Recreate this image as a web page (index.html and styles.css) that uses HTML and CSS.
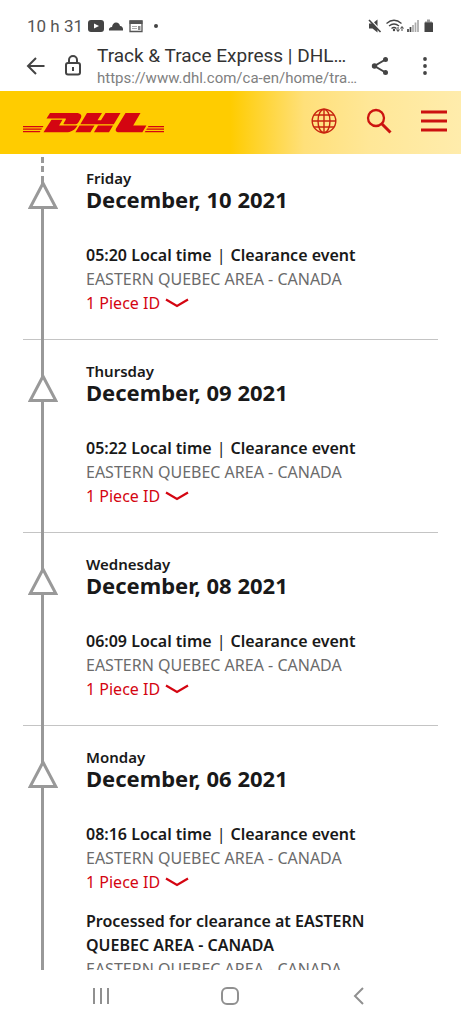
FILE: index.html
```html
<!DOCTYPE html>
<html lang="en">
<head>
<meta charset="utf-8">
<meta name="viewport" content="width=device-width, initial-scale=1">
<title>Track &amp; Trace Express | DHL</title>
<link rel="stylesheet" href="styles.css">
</head>
<body>
<svg class="defs" aria-hidden="true">
  <symbol id="chevron" viewBox="0 0 24 12"><path d="M1 2.500l11 6.500 11-6.500" fill="none" stroke="currentColor" stroke-width="2.200"/></symbol>
  <symbol id="triangle" viewBox="0 0 30 30"><path d="M15 3.200L27.800 27.500H2.200z" fill="#fff" stroke="currentColor" stroke-width="3"/></symbol>
</svg>

<div class="status-bar">
  <span class="clock">10 h 31</span>
  <svg class="status-left" width="72" height="14" viewBox="0 0 72 14" aria-hidden="true">
    <rect x="0" y="1" width="16" height="12" rx="3" fill="#444"/><path d="M6 4.500v5l5-2.500z" fill="#fff"/>
    <path d="M21 11.500c-.5-2 1-3.500 3-3.500 .5-3 2-4.500 4-4.500 2.500 0 3.500 1.500 4 3.500 2 0 3.500 2 3 4.500z" fill="#444"/>
    <path d="M42 2h12v10.500H42z" fill="none" stroke="#555" stroke-width="1.300"/><path d="M41.500 1.500h13V5h-13z" fill="#555"/><path d="M44 7.500h5M44 9.500h5" stroke="#aaa"/><path d="M50 7h2.500v4H50z" fill="#888"/>
    <circle cx="68" cy="7" r="2" fill="#444"/>
  </svg>
  <svg class="status-right" width="66" height="16" viewBox="0 0 66 16" aria-hidden="true">
    <path d="M1 5.500h3.500l5-4v13l-5-4H1z" fill="#444"/><path d="M2 1l11 12" stroke="#fff" stroke-width="1.500"/><path d="M1 2l11.500 12" stroke="#444" stroke-width="1.600"/>
    <g fill="none" stroke="#444" stroke-width="1.300"><path d="M18.500 5.500q7.500-6.500 15 0M21 8q5-4 10 0M23.500 10.500q2.500-2 5 0"/></g><circle cx="26" cy="12" r="1.200" fill="#444"/>
    <path d="M30 9v4m-1.500-1.500L30 13.500l1.500-2M34 13V9m-1.500 1.500L34 8.500l1.500 2" fill="none" stroke="#444"/>
    <path d="M40 14v-3M42.500 14V9" stroke="#444" stroke-width="1.700"/><path d="M45 14V7M47.500 14V4.500M50 14V2" stroke="#aaa" stroke-width="1.700"/>
    <path d="M57 3.500h2V1.500h3v2h2V5h-7z" fill="#999"/><path d="M56.500 4.500h8.500v9.500h-8.500z" fill="#444"/>
  </svg>
</div>

<div class="browser-bar">
  <button class="icon-button" aria-label="Back"><svg width="20" height="20" viewBox="0 0 20 20"><path d="M18.500 10H2M10 2l-8 8 8 8" fill="none" stroke="#444" stroke-width="2"/></svg></button>
  <button class="icon-button lock" aria-label="Site security"><svg width="18" height="22" viewBox="0 0 18 22"><rect x="2" y="8" width="14" height="11.500" rx="2" fill="none" stroke="#444" stroke-width="2"/><path d="M5 8V5a4 4 0 0 1 8 0v3M9 12v4" fill="none" stroke="#444" stroke-width="2"/></svg></button>
  <div class="page-info">
    <div class="page-title">Track &amp; Trace Express | DHL…</div>
    <div class="page-url">https://www.dhl.com/ca-en/home/tra…</div>
  </div>
  <button class="icon-button share" aria-label="Share"><svg width="18" height="20" viewBox="0 0 18 20"><path d="M14.500 3.500L3.500 10l11 6.500" fill="none" stroke="#444" stroke-width="2"/><g fill="#444"><circle cx="14.500" cy="3.500" r="2.500"/><circle cx="3.500" cy="10" r="2.700"/><circle cx="14.500" cy="16.500" r="2.500"/></g></svg></button>
  <button class="icon-button more" aria-label="More options"><svg width="6" height="20" viewBox="0 0 6 20" fill="#444"><circle cx="3" cy="3" r="1.900"/><circle cx="3" cy="10" r="1.900"/><circle cx="3" cy="17" r="1.900"/></svg></button>
</div>

<header class="site-header">
  <a class="logo" href="#" aria-label="DHL home">
    <svg width="142" height="20" viewBox="0 0 142 20" fill="#d40511">
      <path d="M0 13h20.500l-.8 1.300H0zM0 15.500h19l-.8 1.300H0zM0 18h17.500l-.8 1.300H0zM125.500 13H141v1.300h-16.300zM124 15.500h17v1.300h-17.800zM122.500 18H141v1.300h-19.300z"/>
      <path d="M27 0h26c5 0 6.500 2.500 4.500 5.800l-2 3.400c-.8 1.300-1.600 2-3 2H41.500c-1 0-1.200-.5-.7-1.300l1.800-2.900c.5-.9.3-1.400-.6-1.400H23.500z"/>
      <path d="M28.500 6.800h11l-3.400 5.600h18.400C52 17 48 19.200 43 19.200H20.500z"/>
      <path d="M64 0h15l-4.500 7.300H78L82.500 0h15l-6.700 11.200H57.300zM56.500 12.400h15l-4.100 6.800h-15zM75 12.400h15l-4 6.800H71z"/>
      <path d="M102.500 0h15l-7.300 12.400h13.200l-4 6.800H96c-3.500 0-4-2.200-2.500-4.500z"/>
    </svg>
  </a>
  <nav class="site-tools" aria-label="Site">
    <button class="icon-button" aria-label="Language"><svg width="26" height="26" viewBox="0 0 26 26" fill="none" stroke="#c8240f" stroke-width="1.400"><circle cx="13" cy="13" r="11.800"/><ellipse cx="13" cy="13" rx="6" ry="11.800"/><path d="M13 1v24M1 13h24M3 7h20M3 19h20"/></svg></button>
    <button class="icon-button" aria-label="Search"><svg width="26" height="26" viewBox="0 0 26 26" fill="none" stroke="#cc1410"><circle cx="10" cy="10" r="8" stroke-width="2.300"/><path d="M16 16l8.500 8.500" stroke-width="3"/></svg></button>
    <button class="icon-button" aria-label="Menu"><svg width="26" height="24" viewBox="0 0 26 24" stroke="#cc1010" stroke-width="3"><path d="M0 3h26M0 12h26M0 21h26"/></svg></button>
  </nav>
</header>

<main class="tracking">
  <section class="day day-first">
    <div class="rail"><svg class="marker" width="30" height="30"><use href="#triangle"/></svg></div>
    <div class="day-body">
      <h2 class="day-heading"><span class="weekday">Friday</span><span class="date">December, 10 2021</span></h2>
      <article class="event"><h3 class="event-title">05:20 Local time<span class="bar">|</span>Clearance event</h3><p class="place">EASTERN QUEBEC AREA - CANADA</p><button class="pieces">1 Piece ID<svg width="24" height="12"><use href="#chevron"/></svg></button></article>
    </div>
  </section>
  <section class="day">
    <div class="rail"><svg class="marker" width="30" height="30"><use href="#triangle"/></svg></div>
    <div class="day-body">
      <h2 class="day-heading"><span class="weekday">Thursday</span><span class="date">December, 09 2021</span></h2>
      <article class="event"><h3 class="event-title">05:22 Local time<span class="bar">|</span>Clearance event</h3><p class="place">EASTERN QUEBEC AREA - CANADA</p><button class="pieces">1 Piece ID<svg width="24" height="12"><use href="#chevron"/></svg></button></article>
    </div>
  </section>
  <section class="day">
    <div class="rail"><svg class="marker" width="30" height="30"><use href="#triangle"/></svg></div>
    <div class="day-body">
      <h2 class="day-heading"><span class="weekday">Wednesday</span><span class="date">December, 08 2021</span></h2>
      <article class="event"><h3 class="event-title">06:09 Local time<span class="bar">|</span>Clearance event</h3><p class="place">EASTERN QUEBEC AREA - CANADA</p><button class="pieces">1 Piece ID<svg width="24" height="12"><use href="#chevron"/></svg></button></article>
    </div>
  </section>
  <section class="day">
    <div class="rail"><svg class="marker" width="30" height="30"><use href="#triangle"/></svg></div>
    <div class="day-body">
      <h2 class="day-heading"><span class="weekday">Monday</span><span class="date">December, 06 2021</span></h2>
      <article class="event"><h3 class="event-title">08:16 Local time<span class="bar">|</span>Clearance event</h3><p class="place">EASTERN QUEBEC AREA - CANADA</p><button class="pieces">1 Piece ID<svg width="24" height="12"><use href="#chevron"/></svg></button></article>
      <article class="event"><h3 class="event-title">Processed for clearance at EASTERN QUEBEC AREA - CANADA</h3><p class="place">EASTERN QUEBEC AREA - CANADA</p></article>
    </div>
  </section>
</main>

<nav class="system-nav" aria-label="System">
  <button class="icon-button" aria-label="Recent apps"><svg width="18" height="18" viewBox="0 0 18 18" stroke="#909090" stroke-width="2"><path d="M2 1v16M9 1v16M16 1v16"/></svg></button>
  <button class="icon-button" aria-label="Home"><svg width="20" height="20" viewBox="0 0 20 20"><rect x="2" y="2" width="16" height="16" rx="5" fill="none" stroke="#909090" stroke-width="2"/></svg></button>
  <button class="icon-button" aria-label="Back"><svg width="18" height="18" viewBox="0 0 18 18"><path d="M13 1L5 9l8 8" fill="none" stroke="#909090" stroke-width="2"/></svg></button>
</nav>
</body>
</html>
```
FILE: styles.css
```css
* {
  box-sizing: border-box;
}

body {
  margin: 0;
  height: 100vh;
  display: flex;
  flex-direction: column;
  overflow: hidden;
  background: #fff;
  color: #191919;
  font-family: "Noto Sans", sans-serif;
}

svg {
  display: block;
  flex: none;
}

.defs {
  width: 0;
  height: 0;
  position: absolute;
}

.icon-button {
  display: flex;
  align-items: center;
  justify-content: center;
  padding: 0;
  border: 0;
  background: none;
}

.status-bar {
  display: flex;
  align-items: center;
  gap: 5px;
  padding: 16px 27px 0;
  font: 17px/20px Roboto, sans-serif;
  color: #555;
}

.status-right {
  margin-left: auto;
}

.browser-bar {
  display: flex;
  align-items: center;
  padding: 8px 32px 3px 26px;
  font-family: Roboto, sans-serif;
}

.lock {
  margin: 0 15px 0 18px;
}

.page-info {
  flex: 1;
  min-width: 0;
  white-space: nowrap;
}

.page-title {
  font-size: 19px;
  line-height: 24px;
  color: #333;
}

.page-url {
  font-size: 15px;
  line-height: 20px;
  color: #808080;
}

.share {
  margin-right: 32px;
}

.more {
  padding: 0 1px;
}

.site-header {
  display: flex;
  align-items: center;
  justify-content: space-between;
  padding: 17px 14px 20px 23px;
  background: linear-gradient(90deg, #fc0 0%, #fc0 50%, #ffe07a 66%, #ffe797 80%, #ffecac 100%);
}

.logo {
  padding-top: 3px;
}

.site-tools {
  display: flex;
  gap: 29px;
}

.tracking {
  flex: 1;
  min-height: 0;
  overflow: hidden;
  padding: 0 23px;
}

.day {
  display: flex;
  gap: 28px;
  border-bottom: 1px solid #c4c4c4;
}

.rail {
  display: flex;
  justify-content: center;
  padding: 33px 0 0 5px;
  margin-bottom: -1px;
  background: linear-gradient(#999, #999) 18px 0 / 3px 100% no-repeat;
}

.marker {
  color: #999;
}

.day-body {
  flex: 1;
  padding: 21px 16px 24px 0;
}

.day-first .rail {
  padding-top: 26px;
  background:
    linear-gradient(#999, #999) 18px 3px / 3px 6px no-repeat,
    linear-gradient(#999, #999) 18px 12px / 3px 6px no-repeat,
    linear-gradient(#999, #999) 18px 22px / 3px 100% no-repeat;
}

.day-first .day-body {
  padding-top: 14px;
}

.day-heading {
  display: flex;
  flex-direction: column;
  margin: 0 0 32px;
}

.weekday {
  font-size: 15px;
  line-height: 20px;
  font-weight: 600;
}

.date {
  font-size: 22px;
  line-height: 23px;
  font-weight: 700;
}

.event + .event {
  margin-top: 15px;
}

.event-title {
  margin: 0;
  font-size: 16px;
  line-height: 24px;
  font-weight: 600;
}

.bar {
  margin: 0 5px;
  font-weight: 400;
}

.place {
  margin: 0;
  font-size: 16px;
  line-height: 24px;
  color: #6b6b6b;
}

.pieces {
  display: flex;
  align-items: center;
  gap: 5px;
  padding: 0;
  border: 0;
  background: none;
  font: inherit;
  font-size: 16px;
  line-height: 24px;
  color: #d40511;
}

.system-nav {
  display: flex;
  justify-content: space-between;
  padding: 16px 93px 18px 92px;
}
```
